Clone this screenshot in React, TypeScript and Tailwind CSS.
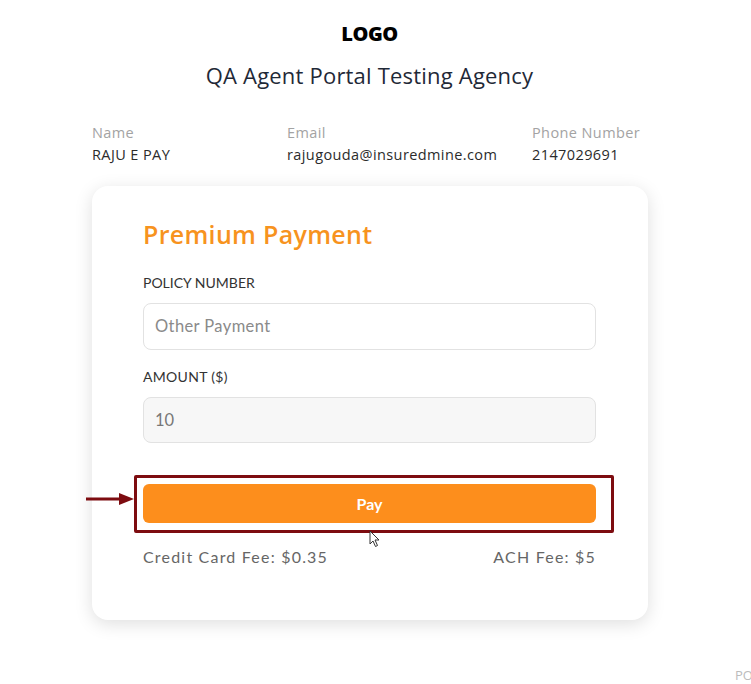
import React from 'react';

const App: React.FC = () => {
  return (
    <div className="relative w-[751px] h-[684px] overflow-hidden bg-white font-['Open_Sans',sans-serif]">
      {/* Header */}
      <div className="flex flex-col items-center pt-[22px] pr-[12px]">
        <div className="text-[20px] leading-6 font-extrabold tracking-tight text-black">LOGO</div>
        <h1 className="mt-[15px] text-[22px] leading-7 tracking-[0.2px] text-[#1f2937]">QA Agent Portal Testing Agency</h1>
      </div>

      {/* Customer info */}
      <div className="mt-[33px] ml-[92px] flex text-[14.5px] leading-[22px] tracking-[0.4px]">
        <div className="w-[195px]">
          <div className="text-[#a3a3a3]">Name</div>
          <div className="text-[#2b2b2b]">RAJU E PAY</div>
        </div>
        <div className="w-[245px]">
          <div className="text-[#a3a3a3]">Email</div>
          <div className="text-[#2b2b2b]">rajugouda@insuredmine.com</div>
        </div>
        <div>
          <div className="text-[#a3a3a3]">Phone Number</div>
          <div className="text-[#2b2b2b]">2147029691</div>
        </div>
      </div>

      {/* Payment card */}
      <div className="mt-[20px] ml-[92px] w-[556px] h-[434px] rounded-2xl bg-white shadow-[0_4px_18px_rgba(0,0,0,0.13)] pl-[51px] pr-[52px] pt-[32px] font-['Lato',sans-serif]">
        <h2 className="text-[25px] leading-8 font-semibold tracking-[0.3px] text-[#f7931e] font-['Open_Sans',sans-serif]">Premium Payment</h2>

        <label className="block mt-[23px] text-[14px] leading-5 text-[#333] uppercase">Policy Number</label>
        <div className="mt-[10px] h-[47px] rounded-lg border border-[#e2e2e2] bg-white flex items-center px-[11px] text-[16.5px] tracking-[0.4px] text-[#8a8a8a]">
          Other Payment
        </div>

        <label className="block mt-[17px] text-[14px] leading-5 tracking-[0.3px] text-[#333] uppercase">Amount ($)</label>
        <div className="mt-[10px] h-[46px] rounded-lg border border-[#e2e2e2] bg-[#f7f7f7] flex items-center px-[11px] text-[16.5px] text-[#777]">
          10
        </div>

        <div className="relative mt-[41px]">
          <button className="w-full h-[39px] rounded-md bg-[#fd8e1c] text-white text-[16px] font-bold">Pay</button>
          {/* annotation highlight */}
          <div className="absolute -left-[9px] -top-[9px] -right-[18px] -bottom-[10px] border-[3px] border-[#7d0c10] rounded-[2px] pointer-events-none" />
          <svg className="absolute -left-[58px] top-[7px]" width="50" height="16" viewBox="0 0 50 16">
            <line x1="1" y1="8" x2="36" y2="8" stroke="#7d0c10" strokeWidth="3" />
            <polygon points="34,2 49,8 34,14" fill="#7d0c10" />
          </svg>
          <svg className="absolute left-[226px] top-[46px]" width="12" height="18" viewBox="0 0 12 18">
            <path d="M1 1 L1 14 L4 11 L6.5 16.5 L8.5 15.5 L6 10 L10 10 Z" fill="white" stroke="#333" strokeWidth="1" strokeLinejoin="round" />
          </svg>
        </div>

        <div className="mt-[22px] flex justify-between text-[16px] text-[#666] tracking-[1.2px]">
          <span>Credit Card Fee: $0.35</span>
          <span>ACH Fee: $5</span>
        </div>
      </div>

      <div className="absolute left-[735px] top-[666px] text-[13px] text-[#bbb]">PO</div>
    </div>
  );
};

export default App;
